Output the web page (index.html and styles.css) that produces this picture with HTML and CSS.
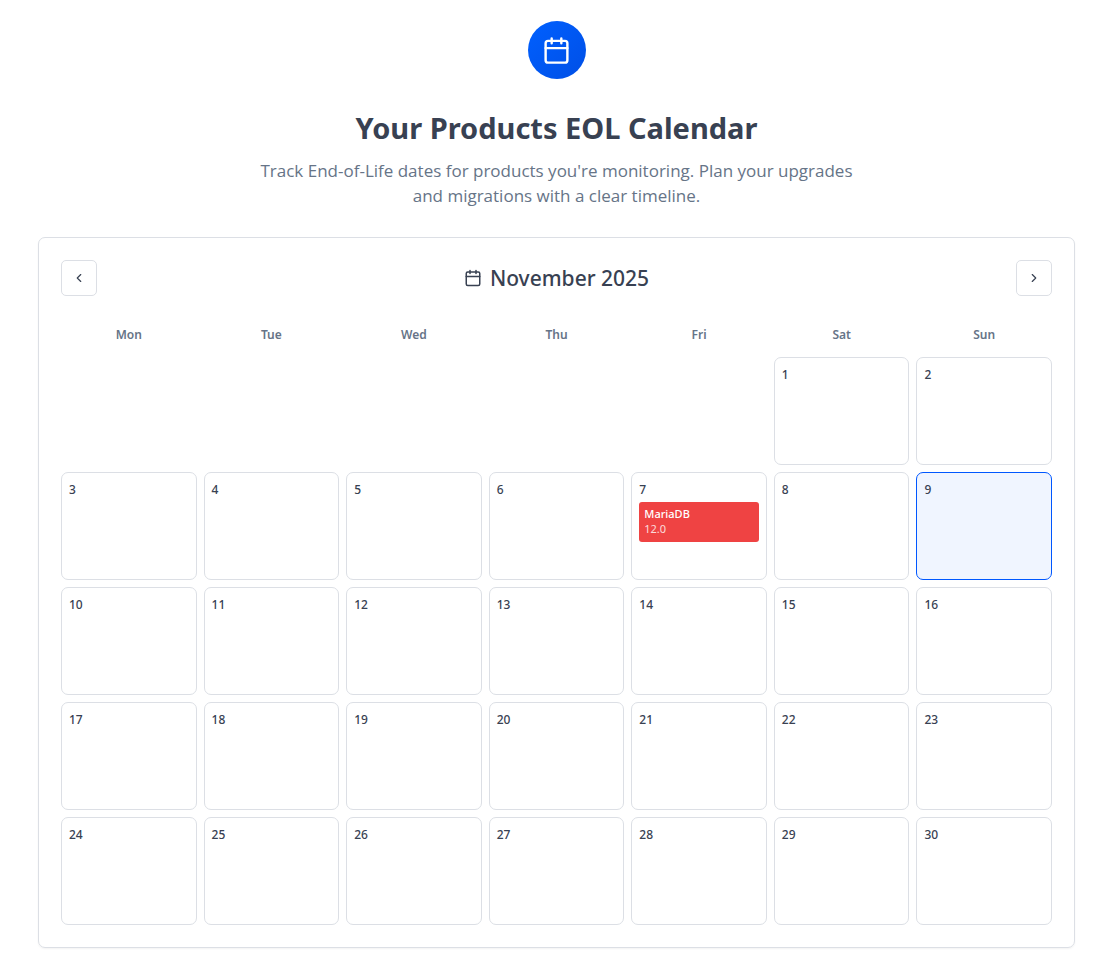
FILE: index.html
```html
<!DOCTYPE html>
<html lang="en">
<head>
    <meta charset="UTF-8" />
    <meta name="viewport" content="width=device-width, initial-scale=1.0" />
    <title>Your Products EOL Calendar</title>
    <link rel="stylesheet" href="styles.css">
</head>
<body>
    <main>
        <header class="hero">
            <div class="hero-icon">
                <svg viewBox="0 0 24 24" width="29" height="29" aria-hidden="true">
                    <rect x="3" y="4" width="18" height="18" rx="2" />
                    <path d="M8 2v4M16 2v4M3 10h18" />
                </svg>
            </div>
            <h1>Your Products EOL Calendar</h1>
            <p>Track End-of-Life dates for products you're monitoring. Plan your upgrades and migrations with a clear timeline.</p>
        </header>
        <section class="calendar">
            <div class="toolbar">
                <button type="button" class="nav-button" aria-label="Previous month">
                    <svg viewBox="0 0 24 24" width="14" height="14"><path d="m15 18-6-6 6-6" /></svg>
                </button>
                <h2>
                    <svg viewBox="0 0 24 24" width="18" height="18" aria-hidden="true">
                        <rect x="3" y="4" width="18" height="18" rx="2" />
                        <path d="M8 2v4M16 2v4M3 10h18" />
                    </svg>
                    November 2025
                </h2>
                <button type="button" class="nav-button" aria-label="Next month">
                    <svg viewBox="0 0 24 24" width="14" height="14"><path d="m9 18 6-6-6-6" /></svg>
                </button>
            </div>
            <div class="weekdays">
                <span>Mon</span>
                <span>Tue</span>
                <span>Wed</span>
                <span>Thu</span>
                <span>Fri</span>
                <span>Sat</span>
                <span>Sun</span>
            </div>
            <div class="days">
                <div class="day first">1</div>
                <div class="day">2</div>
                <div class="day">3</div>
                <div class="day">4</div>
                <div class="day">5</div>
                <div class="day">6</div>
                <div class="day">7
                    <div class="event">
                        <strong>MariaDB</strong>
                        <span>12.0</span>
                    </div>
                </div>
                <div class="day">8</div>
                <div class="day today">9</div>
                <div class="day">10</div>
                <div class="day">11</div>
                <div class="day">12</div>
                <div class="day">13</div>
                <div class="day">14</div>
                <div class="day">15</div>
                <div class="day">16</div>
                <div class="day">17</div>
                <div class="day">18</div>
                <div class="day">19</div>
                <div class="day">20</div>
                <div class="day">21</div>
                <div class="day">22</div>
                <div class="day">23</div>
                <div class="day">24</div>
                <div class="day">25</div>
                <div class="day">26</div>
                <div class="day">27</div>
                <div class="day">28</div>
                <div class="day">29</div>
                <div class="day">30</div>
            </div>
        </section>
    </main>
</body>
</html>
```
FILE: styles.css
```css
:root {
    --text: #384152;
    --muted: #667487;
    --border: #dcdfe5;
    --primary: #0057ff;
}
* {
    box-sizing: border-box;
}
body {
    margin: 0;
    background-color: #fff;
    color: var(--text);
    font-family: "Segoe UI", "Noto Sans", "Open Sans", sans-serif;
}
main {
    padding: 21px 37px 18px 38px;
}
svg {
    fill: none;
    stroke: currentColor;
    stroke-width: 2;
    stroke-linecap: round;
    stroke-linejoin: round;
}
.hero {
    display: flex;
    flex-direction: column;
    align-items: center;
    text-align: center;
}
.hero-icon {
    display: flex;
    align-items: center;
    justify-content: center;
    width: 58px;
    height: 58px;
    border-radius: 50%;
    background: linear-gradient(135deg, #0060ff, #004fe6);
    color: #fff;
}
h1 {
    margin: 29px 0 10px;
    font-size: 29px;
    font-weight: 700;
    line-height: 40px;
}
.hero p {
    max-width: 605px;
    margin: 0 0 29px;
    color: var(--muted);
    font-family: "Segoe UI", "Open Sans", "Noto Sans", sans-serif;
    font-size: 17px;
    line-height: 25px;
}
.calendar {
    padding: 22px;
    border: 1px solid var(--border);
    border-radius: 7px;
    box-shadow: 0 1px 2px rgba(0, 0, 0, 0.05);
}
.toolbar {
    display: flex;
    align-items: center;
    justify-content: space-between;
}
.nav-button {
    display: flex;
    align-items: center;
    justify-content: center;
    width: 36px;
    height: 36px;
    padding: 0;
    border: 1px solid var(--border);
    border-radius: 5px;
    background-color: #fff;
    color: var(--text);
    cursor: pointer;
}
h2 {
    display: flex;
    align-items: center;
    gap: 8px;
    margin: 0;
    font-size: 21px;
    font-weight: 500;
    line-height: 30px;
}
.weekdays,
.days {
    display: grid;
    grid-template-columns: repeat(7, minmax(0, 1fr));
    gap: 7px;
}
.weekdays {
    margin: 22px 0 5px;
    padding: 7px 0;
    color: var(--muted);
    font-size: 12px;
    font-weight: 600;
    line-height: 20px;
    text-align: center;
}
.day {
    min-height: 108px;
    padding: 7px;
    border: 1px solid var(--border);
    border-radius: 7px;
    font-size: 12px;
    font-weight: 500;
    line-height: 20px;
}
.first {
    grid-column: 6;
}
.today {
    border-color: var(--primary);
    background-color: #f0f5ff;
}
.event {
    display: flex;
    flex-direction: column;
    margin-top: 2px;
    padding: 4px 5px 6px;
    border-radius: 3px;
    background-color: #ef4343;
    color: #fff;
    font-size: 11px;
    line-height: 15px;
}
.event strong {
    font-weight: 500;
}
.event span {
    font-weight: 400;
    opacity: 0.8;
}
```
